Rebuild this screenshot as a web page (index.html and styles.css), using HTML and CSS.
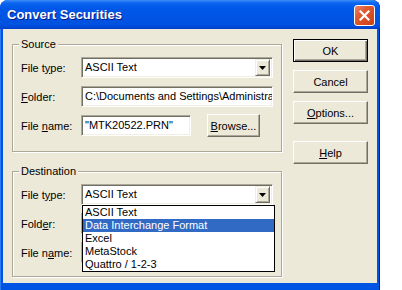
FILE: index.html
```html
<!DOCTYPE html>
<html lang="en">
<head>
  <meta charset="UTF-8" />
  <title>Convert Securities</title>
  <link rel="stylesheet" href="styles.css">
</head>
<body>
  <!-- Dialog window -->
  <div class="window">
    <div class="titlebar">
      <span class="title">Convert Securities</span>
      <span class="close">
        <svg width="11" height="11" viewBox="0 0 11 11"><path d="M1.5 1.5 L9.5 9.5 M9.5 1.5 L1.5 9.5" stroke="#fff" stroke-width="2.2" stroke-linecap="square"/></svg>
      </span>
    </div>

    <div class="client">
      <div class="groups">
        <!-- Source -->
        <fieldset class="group">
          <legend>Source</legend>
          <div class="row">
            <label>File t<u>y</u>pe:</label>
            <div class="combo">
              <span class="combo-text">ASCII Text</span>
              <span class="drop-btn"><svg width="7" height="4" viewBox="0 0 7 4"><path d="M0 0 H7 L3.5 4 Z" fill="#000"/></svg></span>
            </div>
          </div>
          <div class="row">
            <label><u>F</u>older:</label>
            <div class="edit wide">C:\Documents and Settings\Administra</div>
          </div>
          <div class="row">
            <label>File <u>n</u>ame:</label>
            <div class="edit short">"MTK20522.PRN"</div>
            <button class="btn browse"><u>B</u>rowse...</button>
          </div>
        </fieldset>

        <!-- Destination -->
        <fieldset class="group">
          <legend>Destination</legend>
          <div class="row">
            <label>File t<u>y</u>pe:</label>
            <div class="combo">
              <span class="combo-text">ASCII Text</span>
              <span class="drop-btn"><svg width="7" height="4" viewBox="0 0 7 4"><path d="M0 0 H7 L3.5 4 Z" fill="#000"/></svg></span>
              <ul class="drop-list">
                <li>ASCII Text</li>
                <li class="selected">Data Interchange Format</li>
                <li>Excel</li>
                <li>MetaStock</li>
                <li>Quattro / 1-2-3</li>
              </ul>
            </div>
          </div>
          <div class="row">
            <label>Fold<u>e</u>r:</label>
            <div class="edit wide"></div>
          </div>
          <div class="row">
            <label>File n<u>a</u>me:</label>
            <div class="edit short"></div>
          </div>
        </fieldset>
      </div>

      <!-- Buttons -->
      <div class="buttons">
        <button class="btn default">OK</button>
        <button class="btn">Cancel</button>
        <button class="btn"><u>O</u>ptions...</button>
        <button class="btn help"><u>H</u>elp</button>
      </div>
    </div>
  </div>
</body>
</html>
```

FILE: styles.css
```css
* { margin: 0; padding: 0; box-sizing: border-box; }
body {
  background: #fff;
  font-family: "Liberation Sans", Arial, sans-serif;
  font-size: 11px;
  color: #000;
}
.window {
  width: 380px;
  height: 290px;
  display: flex;
  flex-direction: column;
  background: #0054E3;
  border-radius: 8px 8px 0 0;
  padding: 0 3px 7px;
  box-shadow: inset 1px 0 #2E7CF0, inset -1px 0 #001C9A;
}
.titlebar {
  height: 29px;
  margin: 0 -3px;
  display: flex;
  align-items: center;
  justify-content: space-between;
  padding: 0 5px 0 7px;
  border-radius: 8px 8px 0 0;
  background: linear-gradient(to bottom, #3C8DF7 0, #0C64F0 3px, #0058E8 8px, #0055E4 50%, #0052E0 85%, #0040CC 100%);
}
.title {
  color: #fff;
  font-weight: bold;
  font-size: 13px;
  text-shadow: 1px 1px #0A1883;
}
.close {
  width: 21px;
  height: 21px;
  margin-top: 1px;
  display: flex;
  align-items: center;
  justify-content: center;
  border: 1px solid #fff;
  border-radius: 3px;
  background: linear-gradient(135deg, #E9876A 0, #E05A32 35%, #CD3F17 100%);
}
.client {
  flex: 1;
  background: #ECE9D8;
  display: flex;
  gap: 12px;
  padding: 9px 9px 0 9px;
}
.groups {
  width: 269px;
  display: flex;
  flex-direction: column;
  gap: 13px;
}
.group {
  border: 1px solid #ACA899;
  box-shadow: inset 1px 1px #fff, 1px 1px #fff;
  padding: 6px 8px 15px 8px;
}
.group + .group {
  padding-bottom: 13px;
}
.group legend {
  padding: 0 2px;
  margin-left: -2px;
  background: #ECE9D8;
  line-height: 13px;
}
.row {
  display: flex;
  align-items: center;
  height: 21px;
}
.row + .row {
  margin-top: 8px;
}
.row label {
  width: 60px;
  flex-shrink: 0;
}
.edit, .combo {
  height: 21px;
  background: #fff;
  border: 1px solid;
  border-color: #ACA899 #fff #fff #ACA899;
  box-shadow: inset 1px 1px #716F64, inset -1px -1px #F1EFE2;
  padding-left: 3px;
  line-height: 19px;
  white-space: nowrap;
  overflow: hidden;
}
.edit.wide { width: 192px; }
.edit.short { width: 110px; }
.combo {
  position: relative;
  width: 192px;
  display: flex;
  align-items: center;
  overflow: visible;
  padding-right: 2px;
}
.drop-btn {
  margin-left: auto;
  width: 15px;
  height: 17px;
  display: flex;
  align-items: center;
  justify-content: center;
  background: #ECE9D8;
  border: 1px solid;
  border-color: #F1EFE2 #716F64 #716F64 #F1EFE2;
  box-shadow: inset 1px 1px #fff, inset -1px -1px #ACA899;
}
/* Open dropdown list */
.drop-list {
  position: absolute;
  top: 20px;
  left: 0;
  width: 193px;
  list-style: none;
  background: #fff;
  border: 1px solid #000;
  z-index: 2;
}
.drop-list li {
  height: 13px;
  line-height: 13px;
  padding-left: 2px;
}
.drop-list li.selected {
  background: #316AC5;
  color: #fff;
}
.btn {
  width: 75px;
  height: 23px;
  background: #ECE9D8;
  border: 1px solid;
  border-color: #fff #716F64 #716F64 #fff;
  box-shadow: inset -1px -1px #ACA899;
  font-family: "Liberation Sans", Arial, sans-serif;
  font-size: 11px;
  color: #000;
}
.btn.default {
  border-color: #000;
  box-shadow: inset 1px 1px #fff, inset -1px -1px #716F64, inset -2px -2px #ACA899;
}
.btn.browse {
  width: 53px;
  margin-left: 16px;
}
.buttons {
  display: flex;
  flex-direction: column;
  gap: 8px;
  padding-top: 1px;
}
.btn.help {
  margin-top: 9px;
}
```
